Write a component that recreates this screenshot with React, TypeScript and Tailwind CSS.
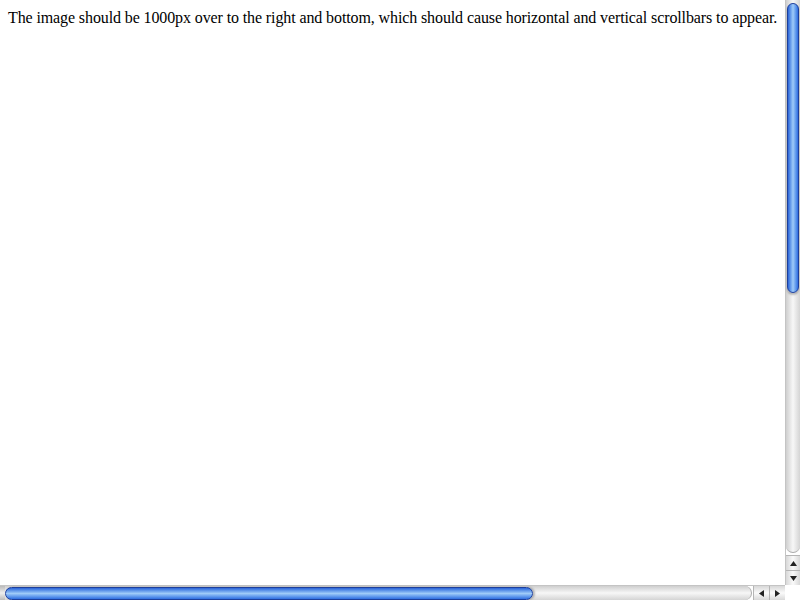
import React from 'react';

function VArrow({ up }: { up?: boolean }) {
  return (
    <div className="h-[15px] w-full flex items-center justify-center border-t border-[#b5b5b5] bg-gradient-to-r from-[#d8d8d8] via-[#fafafa] to-[#d8d8d8]">
      <svg width="7" height="5" viewBox="0 0 7 5">
        <path d={up ? 'M3.5 0 L7 5 L0 5 Z' : 'M0 0 L7 0 L3.5 5 Z'} fill="#222" />
      </svg>
    </div>
  );
}

function HArrow({ left }: { left?: boolean }) {
  return (
    <div className="w-[16px] h-full flex items-center justify-center border-l border-[#b5b5b5] bg-gradient-to-b from-[#d8d8d8] via-[#fafafa] to-[#d8d8d8]">
      <svg width="5" height="7" viewBox="0 0 5 7">
        <path d={left ? 'M0 3.5 L5 0 L5 7 Z' : 'M0 0 L5 3.5 L0 7 Z'} fill="#222" />
      </svg>
    </div>
  );
}

export default function App() {
  return (
    <div className="w-[800px] h-[600px] flex flex-col bg-white overflow-hidden">
      <div className="flex flex-1 min-h-0">
        <div className="flex-1 min-w-0 overflow-hidden p-2 font-['Liberation_Serif',serif] text-[16px] leading-[19px] tracking-[-0.11px] text-black whitespace-nowrap">
          The image should be 1000px over to the right and bottom, which should cause horizontal and vertical scrollbars to appear.
        </div>
        <div className="w-[15px] shrink-0 flex flex-col border-l border-[#c4c4c4]">
          <div className="flex-1 flex flex-col rounded-b-full bg-gradient-to-r from-[#cfcfcf] via-[#f7f7f7] to-[#d4d4d4] border-b border-[#aaa]">
            <div className="h-[290px] mt-[3px] mx-[1px] rounded-full border border-[#1d3f9c] bg-gradient-to-r from-[#2a63d8] via-[#9fcbf8] to-[#2f6ee0] shadow-[0_2px_2px_rgba(0,0,0,0.25)]" />
          </div>
          <div className="h-[2px]" />
          <VArrow up />
          <VArrow />
        </div>
      </div>
      <div className="h-[15px] shrink-0 flex">
        <div className="flex-1 flex border-t border-[#c4c4c4]">
          <div className="flex-1 flex items-center rounded-r-full bg-gradient-to-b from-[#cfcfcf] via-[#f7f7f7] to-[#d4d4d4] border-r border-[#aaa]">
            <div className="w-[5px] h-full bg-gradient-to-b from-[#bbb] via-[#eee] to-[#bbb]" />
            <div className="w-[528px] h-[13px] rounded-full border border-[#1d3f9c] bg-gradient-to-b from-[#2a63d8] via-[#9fcbf8] to-[#2f6ee0] shadow-[2px_0_2px_rgba(0,0,0,0.25)]" />
          </div>
          <div className="w-[1px]" />
          <HArrow left />
          <HArrow />
        </div>
        <div className="w-[15px] shrink-0 bg-white" />
      </div>
    </div>
  );
}
